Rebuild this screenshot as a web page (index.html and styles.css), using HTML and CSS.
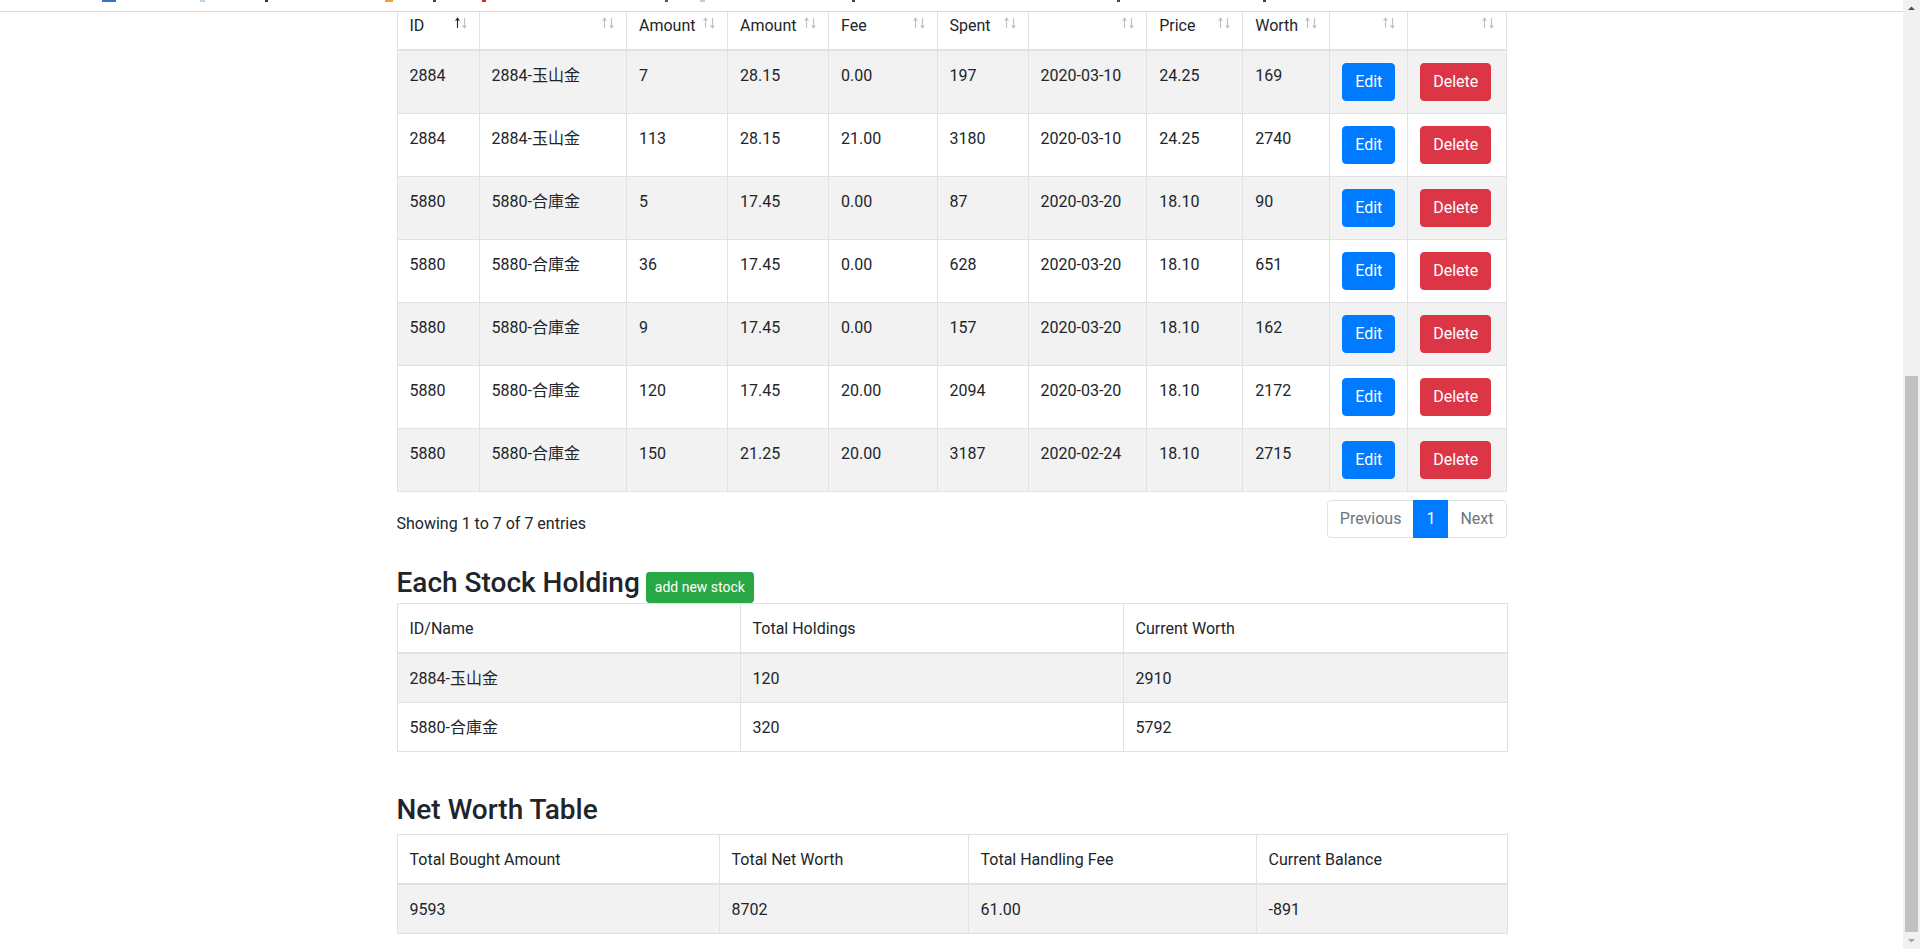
FILE: index.html
```html
<!DOCTYPE html>
<html lang="zh-Hant">
<head>
<meta charset="utf-8">
<title>Stock Holdings</title>
<link rel="stylesheet" href="styles.css">
</head>
<body>
<div class="viewport">
  <div class="page">
    <div class="topbar">
      <span class="speck s1"></span><span class="speck s2"></span><span class="speck s3"></span><span class="speck s4"></span><span class="speck s5"></span><span class="speck s6"></span><span class="speck s7"></span><span class="speck s8"></span><span class="speck s9"></span><span class="speck s10"></span><span class="speck s11"></span>
    </div>
    <div class="container">
      <table class="tbl tbl-main">
        <colgroup>
          <col class="c1"><col class="c2"><col class="c3"><col class="c4"><col class="c5"><col class="c6"><col class="c7"><col class="c8"><col class="c9"><col class="c10"><col class="c11">
        </colgroup>
        <thead>
          <tr>
            <th>ID<span class="sort asc"><svg width="14" height="12" viewBox="0 0 14 12"><g fill="none" stroke-width="1.1"><path class="up" d="M2.5 11V1.5M0.6 3.8L2.5 1.2L4.4 3.8"/><path class="down" d="M9.5 1v9.5M7.6 8.2L9.5 10.8L11.4 8.2"/></g></svg></span></th>
            <th><span class="sort"><svg width="14" height="12" viewBox="0 0 14 12"><g fill="none" stroke-width="1.1"><path class="up" d="M2.5 11V1.5M0.6 3.8L2.5 1.2L4.4 3.8"/><path class="down" d="M9.5 1v9.5M7.6 8.2L9.5 10.8L11.4 8.2"/></g></svg></span></th>
            <th>Amount<span class="sort"><svg width="14" height="12" viewBox="0 0 14 12"><g fill="none" stroke-width="1.1"><path class="up" d="M2.5 11V1.5M0.6 3.8L2.5 1.2L4.4 3.8"/><path class="down" d="M9.5 1v9.5M7.6 8.2L9.5 10.8L11.4 8.2"/></g></svg></span></th>
            <th>Amount<span class="sort"><svg width="14" height="12" viewBox="0 0 14 12"><g fill="none" stroke-width="1.1"><path class="up" d="M2.5 11V1.5M0.6 3.8L2.5 1.2L4.4 3.8"/><path class="down" d="M9.5 1v9.5M7.6 8.2L9.5 10.8L11.4 8.2"/></g></svg></span></th>
            <th>Fee<span class="sort"><svg width="14" height="12" viewBox="0 0 14 12"><g fill="none" stroke-width="1.1"><path class="up" d="M2.5 11V1.5M0.6 3.8L2.5 1.2L4.4 3.8"/><path class="down" d="M9.5 1v9.5M7.6 8.2L9.5 10.8L11.4 8.2"/></g></svg></span></th>
            <th>Spent<span class="sort"><svg width="14" height="12" viewBox="0 0 14 12"><g fill="none" stroke-width="1.1"><path class="up" d="M2.5 11V1.5M0.6 3.8L2.5 1.2L4.4 3.8"/><path class="down" d="M9.5 1v9.5M7.6 8.2L9.5 10.8L11.4 8.2"/></g></svg></span></th>
            <th><span class="sort"><svg width="14" height="12" viewBox="0 0 14 12"><g fill="none" stroke-width="1.1"><path class="up" d="M2.5 11V1.5M0.6 3.8L2.5 1.2L4.4 3.8"/><path class="down" d="M9.5 1v9.5M7.6 8.2L9.5 10.8L11.4 8.2"/></g></svg></span></th>
            <th>Price<span class="sort"><svg width="14" height="12" viewBox="0 0 14 12"><g fill="none" stroke-width="1.1"><path class="up" d="M2.5 11V1.5M0.6 3.8L2.5 1.2L4.4 3.8"/><path class="down" d="M9.5 1v9.5M7.6 8.2L9.5 10.8L11.4 8.2"/></g></svg></span></th>
            <th>Worth<span class="sort"><svg width="14" height="12" viewBox="0 0 14 12"><g fill="none" stroke-width="1.1"><path class="up" d="M2.5 11V1.5M0.6 3.8L2.5 1.2L4.4 3.8"/><path class="down" d="M9.5 1v9.5M7.6 8.2L9.5 10.8L11.4 8.2"/></g></svg></span></th>
            <th><span class="sort"><svg width="14" height="12" viewBox="0 0 14 12"><g fill="none" stroke-width="1.1"><path class="up" d="M2.5 11V1.5M0.6 3.8L2.5 1.2L4.4 3.8"/><path class="down" d="M9.5 1v9.5M7.6 8.2L9.5 10.8L11.4 8.2"/></g></svg></span></th>
            <th><span class="sort"><svg width="14" height="12" viewBox="0 0 14 12"><g fill="none" stroke-width="1.1"><path class="up" d="M2.5 11V1.5M0.6 3.8L2.5 1.2L4.4 3.8"/><path class="down" d="M9.5 1v9.5M7.6 8.2L9.5 10.8L11.4 8.2"/></g></svg></span></th>
          </tr>
        </thead>
        <tbody>
          <tr><td>2884</td><td>2884-玉山金</td><td>7</td><td>28.15</td><td>0.00</td><td>197</td><td>2020-03-10</td><td>24.25</td><td>169</td><td class="act"><button class="btn btn-primary">Edit</button></td><td class="act"><button class="btn btn-danger">Delete</button></td></tr>
          <tr><td>2884</td><td>2884-玉山金</td><td>113</td><td>28.15</td><td>21.00</td><td>3180</td><td>2020-03-10</td><td>24.25</td><td>2740</td><td class="act"><button class="btn btn-primary">Edit</button></td><td class="act"><button class="btn btn-danger">Delete</button></td></tr>
          <tr><td>5880</td><td>5880-合庫金</td><td>5</td><td>17.45</td><td>0.00</td><td>87</td><td>2020-03-20</td><td>18.10</td><td>90</td><td class="act"><button class="btn btn-primary">Edit</button></td><td class="act"><button class="btn btn-danger">Delete</button></td></tr>
          <tr><td>5880</td><td>5880-合庫金</td><td>36</td><td>17.45</td><td>0.00</td><td>628</td><td>2020-03-20</td><td>18.10</td><td>651</td><td class="act"><button class="btn btn-primary">Edit</button></td><td class="act"><button class="btn btn-danger">Delete</button></td></tr>
          <tr><td>5880</td><td>5880-合庫金</td><td>9</td><td>17.45</td><td>0.00</td><td>157</td><td>2020-03-20</td><td>18.10</td><td>162</td><td class="act"><button class="btn btn-primary">Edit</button></td><td class="act"><button class="btn btn-danger">Delete</button></td></tr>
          <tr><td>5880</td><td>5880-合庫金</td><td>120</td><td>17.45</td><td>20.00</td><td>2094</td><td>2020-03-20</td><td>18.10</td><td>2172</td><td class="act"><button class="btn btn-primary">Edit</button></td><td class="act"><button class="btn btn-danger">Delete</button></td></tr>
          <tr><td>5880</td><td>5880-合庫金</td><td>150</td><td>21.25</td><td>20.00</td><td>3187</td><td>2020-02-24</td><td>18.10</td><td>2715</td><td class="act"><button class="btn btn-primary">Edit</button></td><td class="act"><button class="btn btn-danger">Delete</button></td></tr>
        </tbody>
      </table>

      <div class="dt-footer">
        <div class="dt-info">Showing 1 to 7 of 7 entries</div>
        <ul class="pagination">
          <li class="page-item disabled"><span class="page-link first">Previous</span></li>
          <li class="page-item active"><span class="page-link">1</span></li>
          <li class="page-item disabled"><span class="page-link last">Next</span></li>
        </ul>
      </div>

      <div class="section-head">
        <h3 class="title">Each Stock Holding</h3>
        <button class="btn btn-success btn-sm">add new stock</button>
      </div>
      <table class="tbl tbl-hold">
        <colgroup><col class="h1"><col class="h2c"><col class="h3c"></colgroup>
        <thead><tr><th>ID/Name</th><th>Total Holdings</th><th>Current Worth</th></tr></thead>
        <tbody>
          <tr><td>2884-玉山金</td><td>120</td><td>2910</td></tr>
          <tr><td>5880-合庫金</td><td>320</td><td>5792</td></tr>
        </tbody>
      </table>

      <h3 class="title net-title">Net Worth Table</h3>
      <table class="tbl tbl-net">
        <colgroup><col class="n1"><col class="n2"><col class="n3"><col class="n4"></colgroup>
        <thead><tr><th>Total Bought Amount</th><th>Total Net Worth</th><th>Total Handling Fee</th><th>Current Balance</th></tr></thead>
        <tbody>
          <tr><td>9593</td><td>8702</td><td>61.00</td><td>-891</td></tr>
        </tbody>
      </table>
    </div>
  </div>
  <div class="scrollbar">
    <div class="sb-btn"><svg width="17" height="17" viewBox="0 0 17 17"><path d="M5 10h7L8.5 6.5z" fill="#505050"/></svg></div>
    <div class="sb-track"><div class="sb-thumb"></div></div>
    <div class="sb-btn"><svg width="17" height="17" viewBox="0 0 17 17"><path d="M5 7h7L8.5 10.5z" fill="#a3a3a3"/></svg></div>
  </div>
</div>
</body>
</html>
```
FILE: styles.css
```css
* { box-sizing: border-box; }

html, body {
  margin: 0;
  height: 949px;
  overflow: hidden;
}

body {
  font-family: Roboto, "Noto Sans CJK TC", sans-serif;
  font-size: 16px;
  line-height: 1.5;
  color: #212529;
  background: #fff;
}

.viewport {
  display: flex;
  height: 949px;
}

.page {
  flex: 1;
  min-width: 0;
}

/* top strip (bottom edge of a bar above the page) */
.topbar {
  height: 12px;
  border-bottom: 1px solid #dadce0;
  display: flex;
  align-items: flex-start;
}
.speck { height: 2px; display: block; }
.s1 { margin-left: 102px; width: 14px; background: #3b6fc4; }
.s2 { margin-left: 84px; width: 5px; background: #b8d4f5; }
.s3 { margin-left: 60px; width: 3px; background: #333; }
.s4 { margin-left: 117px; width: 8px; background: #f0a030; }
.s5 { margin-left: 40px; width: 3px; background: #444; }
.s6 { margin-left: 46px; width: 4px; background: #e02020; }
.s7 { margin-left: 179px; width: 3px; background: #555; }
.s8 { margin-left: 32px; width: 5px; background: #ccc; }
.s9 { margin-left: 147px; width: 3px; background: #444; }
.s10 { margin-left: 262px; width: 3px; background: #2a4a80; }
.s11 { margin-left: 143px; width: 3px; background: #444; }

.container {
  width: 1110px;
  margin: 0 auto;
}

/* tables */
.tbl {
  width: 100%;
  border-collapse: collapse;
  table-layout: fixed;
  border: 1px solid #dee2e6;
}
.tbl th,
.tbl td {
  border: 1px solid #dee2e6;
  padding: 13px 12px 11px;
  vertical-align: top;
  text-align: left;
  font-weight: 400;
  white-space: nowrap;
}
.tbl td.act {
  padding: 12px;
}
.tbl thead th {
  border-bottom: 2px solid #dee2e6;
}
.tbl tbody tr:nth-child(odd) {
  background: #f2f2f2;
}

.tbl-main {
  border-top: 0;
  margin-bottom: 6px;
}
.tbl-main thead th {
  border-top: 0;
  padding: 2px 30px 11px 12px;
  position: relative;
}
.c1 { width: 82px; }
.c2 { width: 147.5px; }
.c3 { width: 101px; }
.c4 { width: 101px; }
.c5 { width: 108.5px; }
.c6 { width: 91px; }
.c7 { width: 118.7px; }
.c8 { width: 96px; }
.c9 { width: 87px; }
.c10 { width: 78px; }
.c11 { width: 99.3px; }

.sort {
  position: absolute;
  right: 10px;
  top: 5px;
  line-height: 0;
}
.sort svg { display: block; }
.sort .up,
.sort .down { stroke: #bcbec0; }
.sort.asc .up { stroke: #212529; }

.h1 { width: 343px; }
.h2c { width: 383px; }
.h3c { width: 384px; }

.n1 { width: 322px; }
.n2 { width: 249px; }
.n3 { width: 288px; }
.n4 { width: 251px; }

/* buttons */
.btn {
  display: inline-block;
  vertical-align: top;
  font-family: inherit;
  font-size: 16px;
  line-height: 1.5;
  padding: 6px 12px;
  border: 1px solid transparent;
  border-radius: 4px;
  color: #fff;
  margin: 0;
  cursor: pointer;
}
.btn-primary { background: #007bff; border-color: #007bff; }
.btn-danger { background: #dc3545; border-color: #dc3545; }
.btn-success { background: #28a745; border-color: #28a745; }
.btn-sm {
  font-size: 14px;
  line-height: 1.5;
  padding: 4px 8px;
  border-radius: 3.2px;
  vertical-align: baseline;
}

/* datatable footer */
.dt-footer {
  display: flex;
  justify-content: space-between;
  align-items: flex-start;
}
.dt-info {
  padding-top: 13.6px;
}
.pagination {
  display: flex;
  list-style: none;
  margin: 2px 0;
  padding: 0;
}
.page-link {
  display: block;
  padding: 8px 12px;
  line-height: 20px;
  border: 1px solid #dee2e6;
  margin-left: -1px;
  color: #6c757d;
  background: #fff;
}
.page-link.first {
  margin-left: 0;
  border-radius: 4px 0 0 4px;
}
.page-link.last {
  border-radius: 0 4px 4px 0;
}
.page-item.active .page-link {
  background: #007bff;
  border-color: #007bff;
  color: #fff;
  position: relative;
}

/* headings */
.section-head {
  display: flex;
  align-items: baseline;
  gap: 6px;
  margin-top: 26px;
}
.title {
  font-size: 28px;
  font-weight: 500;
  line-height: 1.2;
  margin: 0;
}
.tbl-hold {
  margin-bottom: 16px;
}
.net-title {
  margin-top: 41px;
  margin-bottom: 7px;
}

/* fake scrollbar */
.scrollbar {
  width: 17px;
  flex: 0 0 17px;
  background: #f1f1f1;
  display: flex;
  flex-direction: column;
}
.sb-btn {
  height: 17px;
  flex: 0 0 17px;
}
.sb-btn svg { display: block; }
.sb-track {
  flex: 1;
  padding: 359px 2px 0 2px;
  display: flex;
}
.sb-thumb {
  flex: 1;
  background: #c1c1c1;
}
```
